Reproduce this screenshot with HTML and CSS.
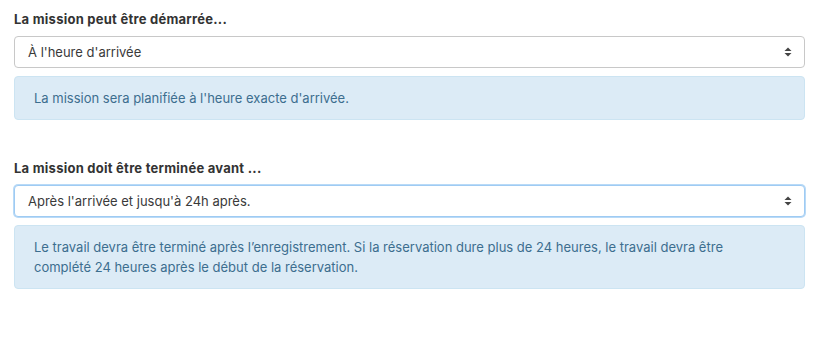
FILE: index.html
```html
<!DOCTYPE html>
<html lang="fr">
<head>
    <meta charset="UTF-8">
    <meta name="viewport" content="width=device-width, initial-scale=1.0">
    <title>Mission</title>
    <link rel="stylesheet" href="styles.css">
</head>
<body>
    <div class="form">
        <div class="form-group">
            <label class="form-label">La mission peut être démarrée...</label>
            <div class="select">
                <span class="select-value">À l'heure d'arrivée</span>
                <svg class="select-arrows" width="8" height="10" viewBox="0 0 8 10">
                    <path d="M4 0.5 L7.5 4 H0.5 Z" fill="#444"/>
                    <path d="M4 9.5 L7.5 6 H0.5 Z" fill="#444"/>
                </svg>
            </div>
            <div class="alert">La mission sera planifiée à l'heure exacte d'arrivée.</div>
        </div>
        <div class="form-group">
            <label class="form-label">La mission doit être terminée avant ...</label>
            <div class="select focused">
                <span class="select-value">Après l'arrivée et jusqu'à 24h après.</span>
                <svg class="select-arrows" width="8" height="10" viewBox="0 0 8 10">
                    <path d="M4 0.5 L7.5 4 H0.5 Z" fill="#444"/>
                    <path d="M4 9.5 L7.5 6 H0.5 Z" fill="#444"/>
                </svg>
            </div>
            <div class="alert">Le travail devra être terminé après l’enregistrement. Si la réservation dure plus de 24 heures, le travail devra être complété 24 heures après le début de la réservation.</div>
        </div>
    </div>
</body>
</html>
```

FILE: styles.css
```css
html {
    background-color: #FFFFFF;
    color: #333333;
    font-family: Inter, "Noto Sans", Arial, sans-serif;
    font-size: 13px;
    line-height: 20px;
}
body {
    margin: 0;
    padding: 9px 23px 0 14px;
}
.form-group {
    margin-bottom: 38px;
}
.form-label {
    display: block;
    font-weight: 700;
    letter-spacing: 0.25px;
    color: #333333;
    margin-bottom: 7px;
}
.select {
    display: flex;
    align-items: center;
    justify-content: space-between;
    height: 32px;
    box-sizing: border-box;
    padding: 0 12px 0 13px;
    border: 1px solid #c8c8c8;
    border-radius: 4px;
    background-color: #FFFFFF;
    color: #3a3a3a;
}
.select.focused {
    border-color: #9fcbf3;
    box-shadow: 0 0 0 1px #b9daf7;
}
.select-arrows {
    flex-shrink: 0;
}
.alert {
    margin-top: 8px;
    padding: 11px 30px 11px 19px;
    border: 1px solid #cce4f2;
    border-radius: 4px;
    background-color: #dcebf6;
    color: #3c6e8f;
}
```
